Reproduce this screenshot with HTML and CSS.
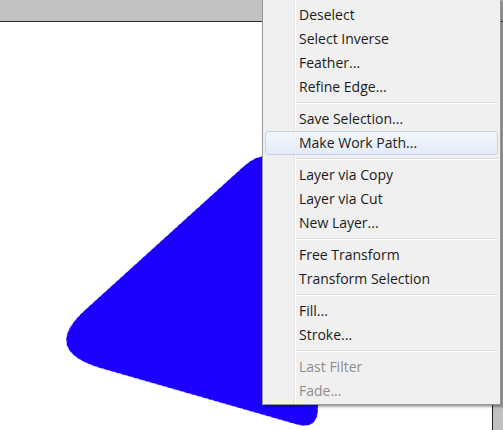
FILE: index.html
```html
<!DOCTYPE html>
<html lang="en">
<head>
  <meta charset="UTF-8">
  <meta name="viewport" content="width=device-width, initial-scale=1.0">
  <title>Selection Context Menu</title>
  <link rel="stylesheet" href="styles.css">
</head>
<body>
  <div class="app">
    <div class="topbar"></div>
    <div class="workspace">
      <div class="canvas">
        <!-- selected shape, drawn in page coordinates -->
        <svg class="art" width="492" height="408" viewBox="0 22 492 408">
          <path class="shape" d="M 272 155 Q 256 155 244 166 L 85 310 Q 41 350 100 368 L 295 424 Q 318 431 318 408 L 322 155 Z"/>
          <path class="ants" d="M 272 155 Q 256 155 244 166 L 85 310 Q 41 350 100 368 L 295 424 Q 318 431 318 408 L 322 155 Z"/>
        </svg>
      </div>
      <div class="rail"></div>
    </div>

    <ul class="menu">
      <li class="item">Deselect</li>
      <li class="item">Select Inverse</li>
      <li class="item">Feather...</li>
      <li class="item">Refine Edge...</li>
      <li class="sep"></li>
      <li class="item">Save Selection...</li>
      <li class="item hover">Make Work Path...</li>
      <li class="sep"></li>
      <li class="item">Layer via Copy</li>
      <li class="item">Layer via Cut</li>
      <li class="item">New Layer...</li>
      <li class="sep"></li>
      <li class="item">Free Transform</li>
      <li class="item">Transform Selection</li>
      <li class="sep"></li>
      <li class="item">Fill...</li>
      <li class="item">Stroke...</li>
      <li class="sep"></li>
      <li class="item disabled">Last Filter</li>
      <li class="item disabled">Fade...</li>
    </ul>
  </div>
</body>
</html>
```
FILE: styles.css
```css
body { margin: 0; overflow: hidden; background: #fff; font-family: "Open Sans", "Noto Sans", sans-serif; }
.app { position: relative; width: 503px; height: 430px; display: flex; flex-direction: column; overflow: hidden; }
.topbar { height: 21px; background: #c2c2c2; border-bottom: 1px solid #2b2b2b; flex: none; }
.workspace { flex: 1; display: flex; min-height: 0; }
.canvas { flex: 1; background: #fff; border-right: 1px solid #1e1e1e; overflow: hidden; }
.rail { width: 10px; background: #c0c0c0; }
.art { display: block; }
.shape { fill: #1c00ff; }
.ants { fill: none; stroke: #d8d8ff; stroke-width: 1; stroke-dasharray: 3 3; opacity: 0.7; }

/* context menu */
.menu {
  position: absolute; left: 262px; top: -1px; width: 239px;
  box-sizing: border-box; margin: 0; padding: 3px 0 1px; list-style: none;
  background-color: #f0f0f0;
  background-image: linear-gradient(to right, transparent 31px, #e2e3e3 31px, #e2e3e3 32px, #fff 32px, #fff 33px, transparent 33px);
  border: 1px solid #979797;
  box-shadow: 2px 2px 2px rgba(0, 0, 0, 0.35);
}
.item {
  height: 24px; box-sizing: border-box; margin: 0 2px; padding-left: 33px;
  border: 1px solid transparent; border-radius: 3px;
  font-size: 14px; line-height: 21px; color: #1b1b1b; white-space: nowrap;
}
.item.hover {
  border-color: #bcd3ea;
  background: linear-gradient(#f3f7fc, #e4ecf6);
}
.item.disabled { color: #8d8d8d; }
.sep { height: 8px; margin: 0 2px 0 33px; position: relative; }
.sep::before {
  content: ""; position: absolute; left: 0; right: 0; top: 3px;
  border-top: 1px solid #dcdcdc; border-bottom: 1px solid #fff;
}
```
